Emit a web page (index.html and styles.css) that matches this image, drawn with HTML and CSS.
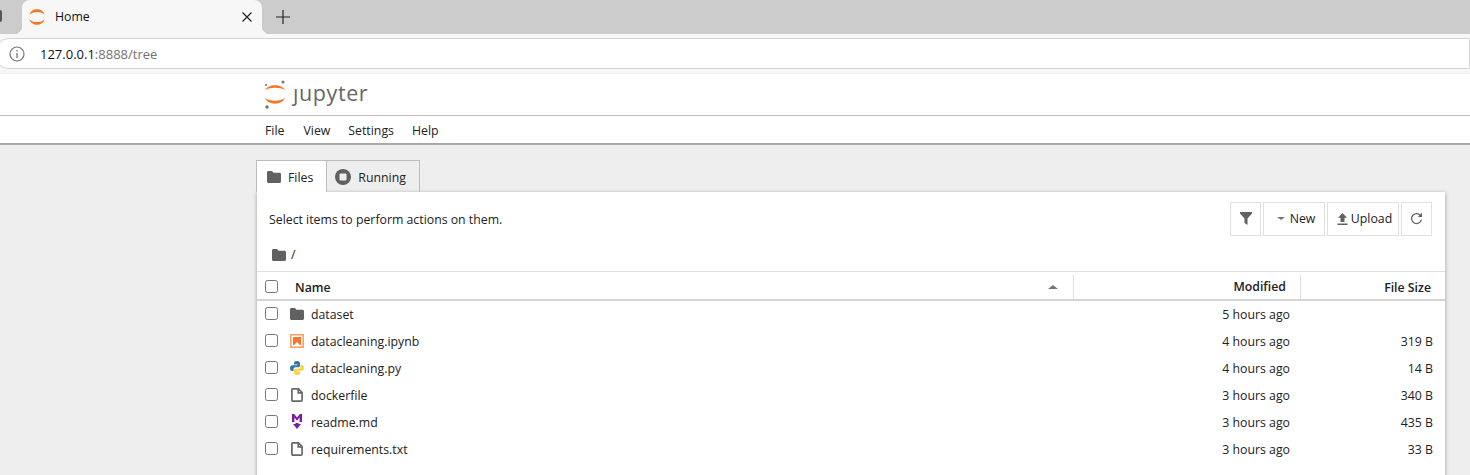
FILE: index.html
```html
<!DOCTYPE html>
<html lang="en">
<head>
    <meta charset="UTF-8">
    <title>Home</title>
    <link rel="stylesheet" href="styles.css">
</head>
<body>
    <div class="tabstrip">
        <div class="stub"></div>
        <div class="browser-tab">
            <svg class="favicon" width="18" height="18" viewBox="0 0 18 18">
                <path d="M.3 6.800C2.500 -.5 13.500 -.5 15.700 6.800C12 3 4 3 .3 6.800Z" fill="#f37726"/>
                <path d="M.3 11.200C2.500 18.500 13.500 18.500 15.700 11.200C12 15 4 15 .3 11.200Z" fill="#f37726"/>
            </svg>
            <span class="tab-title">Home</span>
            <svg class="tab-close" width="10" height="10" viewBox="0 0 10 10">
                <path d="M0.500 0.500L9.500 9.500M9.500 0.500L0.500 9.500" stroke="#222" stroke-width="1.200"/>
            </svg>
        </div>
        <svg class="new-tab" width="14" height="14" viewBox="0 0 14 14">
            <path d="M7 0V14M0 7H14" stroke="#222" stroke-width="1.200"/>
        </svg>
    </div>
    <div class="addressbar">
        <div class="omnibox">
            <svg width="16" height="16" viewBox="0 0 16 16">
                <circle cx="8" cy="8" r="7" fill="none" stroke="#757575" stroke-width="1.200"/>
                <path d="M8 7V12M8 4V5.500" stroke="#757575" stroke-width="1.300"/>
            </svg>
            <span class="url"><span class="host">127.0.0.1</span>:8888/tree</span>
        </div>
    </div>

    <header class="topbar">
        <div class="logo">
            <svg width="24" height="30" viewBox="0 0 24 30">
                <circle cx="19" cy="3" r="1.500" fill="#767677"/>
                <circle cx="2" cy="6" r="1.100" fill="#767677"/>
                <circle cx="3" cy="28" r="1.800" fill="#767677"/>
                <path d="M1 11C4 4.500 18 4.500 21 11C16 8 6 8 1 11Z" fill="#f37726"/>
                <path d="M1 19C4 26.500 18 26.500 21 19C16 22.500 6 22.500 1 19Z" fill="#f37726"/>
            </svg>
            <span class="logo-text">ȷupyter</span>
        </div>
    </header>
    <nav class="menubar">
        <span>File</span>
        <span>View</span>
        <span>Settings</span>
        <span>Help</span>
    </nav>

    <main class="main">
        <div class="tabs">
            <div class="tab active">
                <svg class="icon-folder" width="14" height="12" viewBox="0 0 14 12"><path d="M0 1.500C0 .7.600 0 1.400 0H5L6.500 1.800H12.500C13.300 1.800 14 2.400 14 3.200V10.500C14 11.300 13.300 12 12.500 12H1.500C.700 12 0 11.300 0 10.500Z" fill="#616161"/></svg>
                Files
            </div>
            <div class="tab">
                <svg width="16" height="16" viewBox="0 0 16 16"><circle cx="8" cy="8" r="8" fill="#616161"/><rect x="4.500" y="4.500" width="7" height="7" rx="1" fill="#eee"/></svg>
                Running
            </div>
        </div>
        <section class="panel">
            <div class="toolbar">
                <span>Select items to perform actions on them.</span>
                <div class="actions">
                    <button class="btn btn-icon">
                        <svg width="12" height="13" viewBox="0 0 12 13"><path d="M0 0H12V1.500L7.500 6.500V13L4.500 11V6.500L0 1.500Z" fill="#616161"/></svg>
                    </button>
                    <button class="btn btn-new"><span class="caret"></span>New</button>
                    <button class="btn btn-upload">
                        <svg width="11" height="12" viewBox="0 0 11 12"><path d="M5.500 0L10 4.800H7.500V9H3.500V4.800H1ZM0.500 10.500H10.500V12H0.500Z" fill="#616161"/></svg>
                        Upload
                    </button>
                    <button class="btn btn-icon">
                        <svg width="13" height="13" viewBox="0 0 13 13"><path d="M11 4.200A5 5 0 1 0 11.500 7.500" fill="none" stroke="#616161" stroke-width="1.200"/><path d="M12 .8V5H7.800Z" fill="#616161"/></svg>
                    </button>
                </div>
            </div>
            <div class="breadcrumb">
                <svg width="14" height="12" viewBox="0 0 14 12"><path d="M0 1.500C0 .7.600 0 1.400 0H5L6.500 1.800H12.500C13.300 1.800 14 2.400 14 3.200V10.500C14 11.300 13.300 12 12.500 12H1.500C.700 12 0 11.300 0 10.500Z" fill="#616161"/></svg>
                <span>/</span>
            </div>

            <div class="list-head">
                <span class="check"></span>
                <div class="col-name">Name <span class="sort-up"></span></div>
                <div class="col-modified">Modified</div>
                <div class="col-size">File Size</div>
            </div>

            <div class="row">
                <span class="check"></span>
                <svg class="file-icon" width="14" height="12" viewBox="0 0 14 12"><path d="M0 1.500C0 .7.600 0 1.400 0H5L6.500 1.800H12.500C13.300 1.800 14 2.400 14 3.200V10.500C14 11.300 13.300 12 12.500 12H1.500C.700 12 0 11.300 0 10.500Z" fill="#616161"/></svg>
                <span class="file-name">dataset</span>
                <span class="file-date">5 hours ago</span>
                <span class="file-size"></span>
            </div>
            <div class="row">
                <span class="check"></span>
                <svg class="file-icon" width="14" height="14" viewBox="0 0 14 14"><rect x=".8" y=".8" width="12.400" height="12.400" fill="#fff" stroke="#f4a26a" stroke-width="1.600"/><path d="M3 3H11V11H10L7 8L4 11H3Z" fill="#f37726"/></svg>
                <span class="file-name">datacleaning.ipynb</span>
                <span class="file-date">4 hours ago</span>
                <span class="file-size">319 B</span>
            </div>
            <div class="row">
                <span class="check"></span>
                <svg class="file-icon" width="14" height="14" viewBox="0 0 14 14"><path d="M7 0C4.500 0 4 1 4 2V3.500H7.200V4.200H2.200C.8 4.200 0 5.300 0 7C0 8.800.8 10 2.200 10H3.500V8.200C3.500 7 4.500 6.200 5.500 6.200H8.500C9.500 6.200 10 5.500 10 4.700V2C10 .8 8.800 0 7 0Z" fill="#3a77a8"/><path d="M7 14C9.500 14 10 13 10 12V10.500H6.800V9.800H11.800C13.200 9.800 14 8.700 14 7C14 5.200 13.200 4 11.800 4H10.500V5.800C10.500 7 9.500 7.800 8.500 7.800H5.500C4.500 7.800 4 8.500 4 9.300V12C4 13.200 5.200 14 7 14Z" fill="#fdd240"/></svg>
                <span class="file-name">datacleaning.py</span>
                <span class="file-date">4 hours ago</span>
                <span class="file-size">14 B</span>
            </div>
            <div class="row">
                <span class="check"></span>
                <svg class="file-icon" width="12" height="14" viewBox="0 0 12 14"><path d="M1.500 .9H7.500L11.100 4.500V12C11.100 12.800 10.800 13.100 10 13.100H2C1.200 13.100.9 12.800.9 12V1.500C.9 1 1 .9 1.500 .9ZM7.200 .9V4.800H11.100" fill="none" stroke="#686868" stroke-width="1.700"/></svg>
                <span class="file-name">dockerfile</span>
                <span class="file-date">3 hours ago</span>
                <span class="file-size">340 B</span>
            </div>
            <div class="row">
                <span class="check"></span>
                <svg class="file-icon" width="12" height="15" viewBox="0 0 12 15"><path d="M1 8V0H3.200L6 3.500L8.800 0H11V8H8.600V3.600L6 6.800L3.400 3.600V8Z" fill="#7b1fa2"/><path d="M4.500 9V10H2L6 15L10 10H7.500V9Z" fill="#7b1fa2"/></svg>
                <span class="file-name">readme.md</span>
                <span class="file-date">3 hours ago</span>
                <span class="file-size">435 B</span>
            </div>
            <div class="row">
                <span class="check"></span>
                <svg class="file-icon" width="12" height="14" viewBox="0 0 12 14"><path d="M1.500 .9H7.500L11.100 4.500V12C11.100 12.800 10.800 13.100 10 13.100H2C1.200 13.100.9 12.800.9 12V1.500C.9 1 1 .9 1.500 .9ZM7.200 .9V4.800H11.100" fill="none" stroke="#686868" stroke-width="1.700"/></svg>
                <span class="file-name">requirements.txt</span>
                <span class="file-date">3 hours ago</span>
                <span class="file-size">33 B</span>
            </div>
        </section>
    </main>
</body>
</html>
```

FILE: styles.css
```css
html, body {
    height: 475px;
    overflow: hidden;
}

body {
    margin: 0;
    font-family: "Open Sans", "Noto Sans", sans-serif;
    font-size: 12.3px;
    color: #212121;
    background-color: #eee;
}

svg {
    display: block;
    flex: none;
}

.tabstrip {
    display: flex;
    align-items: flex-start;
    height: 34px;
    background-color: #ccc;
}

.stub {
    width: 2px;
    height: 12px;
    box-sizing: border-box;
    margin-top: 10px;
    margin-right: 20px;
    background-color: #555;
    border-radius: 0 2px 2px 0;
}

.browser-tab {
    position: relative;
    display: flex;
    align-items: center;
    width: 240px;
    height: 34px;
    box-sizing: border-box;
    padding: 0 10px 0 7px;
    background-color: #f7f7f7;
    border-radius: 8px 8px 0 0;
}

.browser-tab::before,
.browser-tab::after {
    content: "";
    position: absolute;
    bottom: 0;
    width: 8px;
    height: 8px;
}

.browser-tab::before {
    left: -8px;
    background: radial-gradient(circle at 0 0, transparent 8px, #f7f7f7 8.5px);
}

.browser-tab::after {
    right: -8px;
    background: radial-gradient(circle at 100% 0, transparent 8px, #f7f7f7 8.5px);
}

.tab-title {
    margin-left: 8px;
    margin-bottom: 1px;
    flex: 1;
    color: #111;
}

.new-tab {
    margin: 10px 0 0 14px;
}

.addressbar {
    height: 39px;
    box-sizing: border-box;
    padding: 4px 0;
    background-color: #f7f7f7;
}

.omnibox {
    display: flex;
    align-items: center;
    height: 31px;
    box-sizing: border-box;
    margin-left: -6px;
    padding-left: 14px;
    background-color: #fff;
    border: 1px solid #d4d4d4;
    border-radius: 15px 0 0 15px;
}

.url {
    margin-left: 15px;
    font-size: 13px;
    color: #737373;
}

.host {
    color: #111;
}

.topbar {
    height: 42px;
    box-sizing: border-box;
    margin-top: 1px;
    background-color: #fff;
    border-bottom: 1px solid #bdbdbd;
    padding: 5px 0 0 264px;
}

.logo {
    display: flex;
    align-items: flex-start;
}

.logo-text {
    margin: -1px 0 0 5px;
    font-size: 21.5px;
    line-height: 30px;
    letter-spacing: 0.6px;
    color: #666;
}

.menubar {
    display: flex;
    gap: 18px;
    align-items: center;
    height: 29px;
    box-sizing: border-box;
    padding: 2px 0 0 265px;
    background-color: #fff;
    border-bottom: 2px solid #a8a8a8;
}

.menubar span:first-child {
    margin-right: 1px;
}

.main {
    padding: 15px 0 0 256px;
    width: 1189px;
}

.tabs {
    display: flex;
    height: 32px;
}

.tab {
    display: flex;
    gap: 7px;
    align-items: center;
    box-sizing: border-box;
    padding: 1px 13px 0 8px;
    border: 1px solid #bdbdbd;
    border-bottom: none;
    border-left: none;
}

.tab.active {
    padding: 1px 13px 0 10px;
    background-color: #fff;
    border-left: 1px solid #bdbdbd;
}

.panel {
    margin-left: 1px;
    height: 300px;
    background-color: #fff;
    box-shadow: 0 1px 4px rgba(0, 0, 0, 0.35);
}

.toolbar {
    display: flex;
    justify-content: space-between;
    align-items: center;
    height: 54px;
    padding: 0 13px 0 12px;
}

.actions {
    display: flex;
    gap: 2px;
    margin-top: -1px;
}

.btn {
    display: flex;
    gap: 3px;
    align-items: center;
    justify-content: center;
    width: 72px;
    height: 34px;
    padding: 0;
    font-family: inherit;
    font-size: 12.3px;
    color: #212121;
    background-color: #fff;
    border: 1px solid #e0e0e0;
}

.btn-icon {
    width: 31px;
}

.btn-new {
    width: 62px;
    gap: 5px;
    padding-left: 4px;
}

.btn-upload {
    padding-left: 3px;
}

.caret {
    width: 0;
    height: 0;
    border-left: 4px solid transparent;
    border-right: 4px solid transparent;
    border-top: 3px solid #757575;
}

.breadcrumb {
    display: flex;
    gap: 5px;
    align-items: center;
    height: 25px;
    box-sizing: border-box;
    padding: 0 0 8px 15px;
}

.list-head {
    display: flex;
    align-items: center;
    height: 30px;
    box-sizing: border-box;
    border-top: 1px solid #e0e0e0;
    border-bottom: 2px solid #d4d4d4;
    padding: 3px 0 0 8px;
    font-weight: 600;
}

.check {
    width: 11px;
    height: 11px;
    flex: none;
    margin-bottom: 2px;
    background-color: #fff;
    border: 1px solid #767676;
    border-radius: 2.500px;
}

.col-name {
    display: flex;
    justify-content: space-between;
    align-items: center;
    width: 779px;
    box-sizing: border-box;
    margin-left: 17px;
    padding-right: 15px;
    border-right: 1px solid #e0e0e0;
    height: 24px;
}

.sort-up {
    width: 0;
    height: 0;
    border-left: 5px solid transparent;
    border-right: 5px solid transparent;
    border-bottom: 4px solid #757575;
}

.col-modified {
    width: 227px;
    box-sizing: border-box;
    padding-right: 14px;
    text-align: right;
    border-right: 1px solid #e0e0e0;
    line-height: 24px;
}

.col-size {
    width: 130px;
    text-align: right;
}

.row {
    display: flex;
    align-items: center;
    height: 27px;
    padding-left: 8px;
}

.file-icon {
    width: 14px;
    margin: 0 7px 2px 12px;
}

.file-name {
    width: 300px;
}

.file-date {
    margin-left: auto;
    width: 100px;
    text-align: right;
}

.file-size {
    width: 155px;
    padding-right: 12px;
    box-sizing: border-box;
    text-align: right;
}
```
